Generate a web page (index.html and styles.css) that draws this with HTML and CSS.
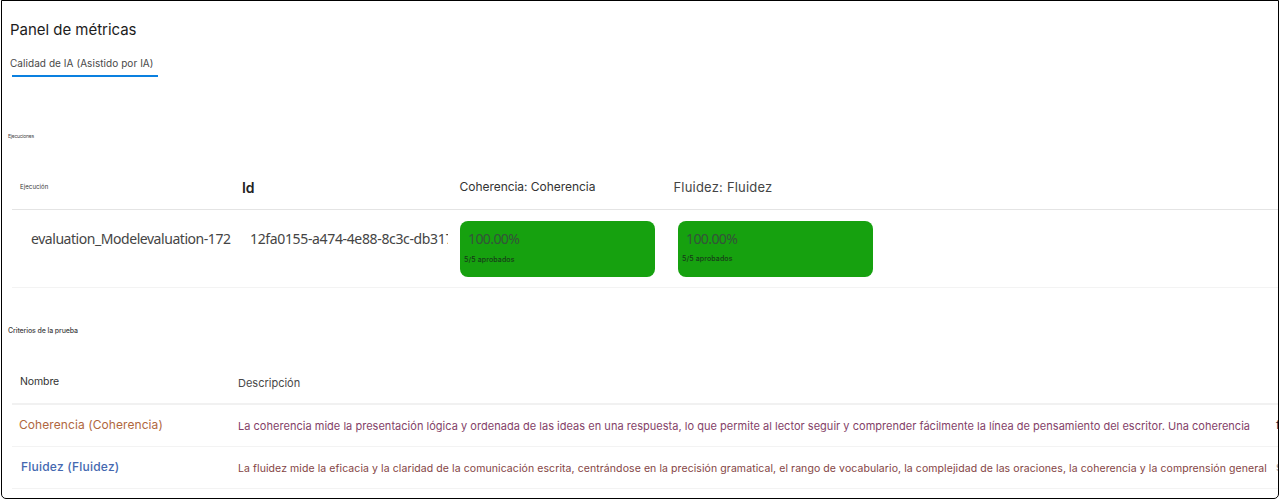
FILE: index.html
```html
<!DOCTYPE html>
<html lang="es">
<head>
<meta charset="utf-8">
<title>Panel de métricas</title>
<link rel="stylesheet" href="styles.css">
</head>
<body>
<main class="panel">
  <h1 class="title"><span>Panel de métricas</span></h1>
  <nav class="tabs"><span class="tab"><span>Calidad de IA (Asistido por IA)</span></span></nav>

  <h2 class="section runs-title"><span>Ejecuciones</span></h2>
  <section class="table">
    <div class="row runs-head">
      <span class="h-run">Ejecución</span>
      <span class="h-id">Id</span>
      <span class="h-coh">Coherencia: Coherencia</span>
      <span class="h-flu">Fluidez: Fluidez</span>
    </div>
    <div class="row runs-row">
      <span class="run-name">evaluation_Modelevaluation-172</span>
      <span class="run-id">12fa0155-a474-4e88-8c3c-db317</span>
      <div class="score"><span class="pct">100.00%</span><span class="passed">5/5 aprobados</span></div>
      <div class="score second"><span class="pct">100.00%</span><span class="passed">5/5 aprobados</span></div>
    </div>
  </section>

  <h2 class="section criteria-title"><span>Criterios de la prueba</span></h2>
  <section class="table">
    <div class="row crit-head">
      <span class="h-name">Nombre</span>
      <span class="h-desc">Descripción</span>
    </div>
    <div class="row crit-row">
      <span class="name-coh">Coherencia (Coherencia)</span>
      <span class="desc-coh">La coherencia mide la presentación lógica y ordenada de las ideas en una respuesta, lo que permite al lector seguir y comprender fácilmente la línea de pensamiento del escritor. Una coherencia</span>
      <span class="more">f</span>
    </div>
    <div class="row crit-row">
      <span class="name-flu">Fluidez (Fluidez)</span>
      <span class="desc-flu">La fluidez mide la eficacia y la claridad de la comunicación escrita, centrándose en la precisión gramatical, el rango de vocabulario, la complejidad de las oraciones, la coherencia y la comprensión general</span>
      <span class="more pale">s</span>
    </div>
  </section>
</main>
</body>
</html>
```
FILE: styles.css
```css
* { box-sizing: border-box; }
body {
  margin: 0;
  padding-left: 1px;
  background: #fff;
  font-family: Inter, "Liberation Sans", sans-serif;
  color: #333;
}
.panel {
  width: 1278px;
  height: 499px;
  border: 1px solid #000;
  border-radius: 0 0 5px 5px;
  overflow: hidden;
  white-space: nowrap;
}
.title {
  margin: 0;
  padding: 19px 0 0 8px;
  font-size: 15px;
  line-height: 20px;
  font-weight: 400;
  letter-spacing: -0.03px;
  color: #1c1c1c;
}
.tabs { display: flex; padding: 15px 0 0 10px; }
.tab {
  width: 146px;
  height: 22px;
  border-bottom: 2px solid #0a80e0;
  font-size: 10px;
  line-height: 16px;
  letter-spacing: 0.06px;
  color: #484848;
}
.tab span { margin-left: -2px; }
.section { margin: 0; padding-left: 6px; font-weight: 400; color: #444; }
.runs-title { padding-top: 54px; font-size: 5px; line-height: 10px; letter-spacing: -0.25px; }
.table { padding-left: 10px; }
.row { display: flex; border-bottom: 1px solid #f3f3f3; }
.row > * { flex: none; }
.runs-head {
  height: 69px;
  padding-top: 36px;
  line-height: 20px;
  border-color: #e4e4e4;
}
.h-run { width: 222px; padding-left: 8px; font-size: 6px; letter-spacing: 0.1px; }
.h-id { width: 218px; padding: 1px 0 0 8px; font-size: 14px; font-weight: 600; letter-spacing: -0.2px; color: #222; }
.h-coh { width: 214px; padding-left: 7.5px; font-size: 12px; letter-spacing: -0.04px; }
.h-flu { padding: 0 0 0 7.5px; font-size: 13px; letter-spacing: 0.2px; color: #444; }
.runs-row { height: 78px; padding-top: 11px; }
.run-name, .run-id {
  font-family: "Noto Sans", sans-serif;
  font-size: 14px;
  line-height: 36px;
  color: #444;
  overflow: hidden;
}
.run-name { width: 220px; margin-left: 19px; letter-spacing: -0.45px; }
.run-id { width: 198px; margin-left: -1px; letter-spacing: -0.35px; }
.score {
  display: flex;
  flex-direction: column;
  width: 195px;
  height: 56px;
  margin-left: 12px;
  padding-top: 8px;
  border-radius: 8px;
  background: #16a10f;
}
.score.second { margin-left: 23px; }
.pct {
  padding-left: 8px;
  font-family: "Noto Sans", sans-serif;
  font-size: 14px;
  line-height: 20px;
  letter-spacing: -0.6px;
  color: #34533a;
}
.passed { padding: 6px 0 0 4px; font-size: 7px; font-weight: 500; line-height: 10px; letter-spacing: 0.13px; color: #173b19; }
.second .passed { padding-top: 5px; }
.criteria-title { padding-top: 38px; font-size: 7px; font-weight: 500; line-height: 10px; letter-spacing: -0.1px; }
.crit-head { height: 69px; padding-top: 37px; line-height: 18px; border-bottom: 2px solid #f1f1f1; }
.h-name { width: 226px; padding-left: 8px; font-size: 10.5px; letter-spacing: -0.1px; }
.h-desc { padding-top: 1px; font-size: 11px; color: #484848; }
.crit-row { height: 42px; padding-top: 11px; line-height: 18px; }
.name-coh { width: 226px; padding-left: 7px; font-size: 12px; letter-spacing: 0.08px; color: #b0673e; }
.name-flu { width: 226px; padding-left: 9px; font-size: 12px; font-weight: 500; letter-spacing: 0.22px; color: #4468b0; }
.desc-coh, .desc-flu { width: 1038px; padding-top: 1px; }
.desc-coh { font-size: 11px; letter-spacing: 0.025px; color: #843f68; }
.desc-flu { padding-top: 2px; font-size: 10.5px; letter-spacing: 0.085px; color: #844444; }
.more { font-size: 11px; color: #223; }
.pale { color: #999; }
```
